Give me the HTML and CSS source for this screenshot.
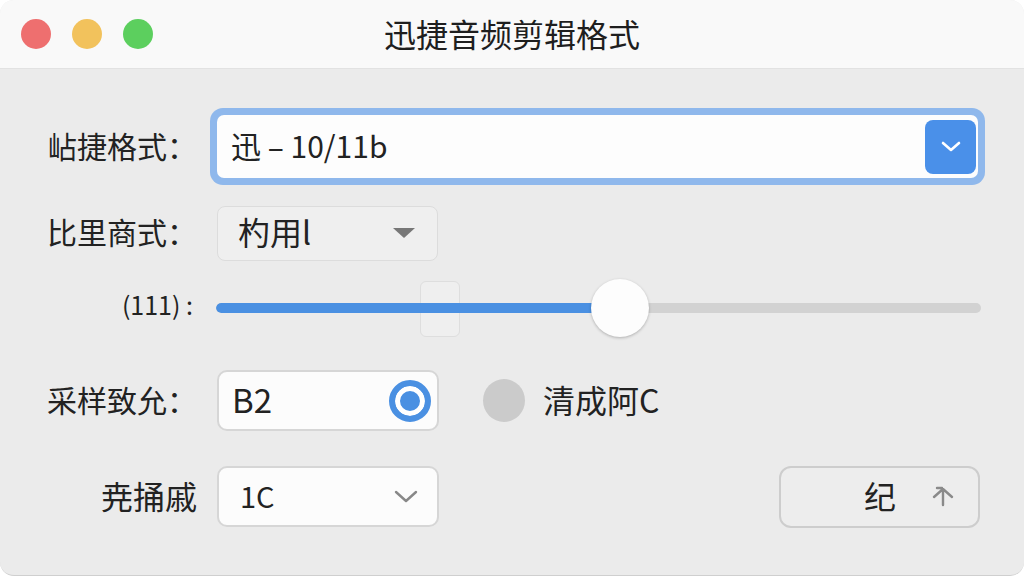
FILE: index.html
```html
<!DOCTYPE html>
<html lang="zh">
<head>
    <meta charset="UTF-8">
    <meta name="viewport" content="width=device-width, initial-scale=1.0">
    <title>迅捷音频剪辑格式</title>
    <link rel="stylesheet" href="styles.css">
</head>
<body>
    <div class="window">
        <div class="titlebar">
            <div class="lights">
                <span class="light red"></span>
                <span class="light yellow"></span>
                <span class="light green"></span>
            </div>
            <div class="title">迅捷音频剪辑格式</div>
        </div>

        <div class="content">
            <!-- format -->
            <div class="row row-format">
                <label class="label">岾捷格式：</label>
                <div class="focus-ring">
                    <div class="select-main">
                        <span class="value">迅 – 10/11b</span>
                        <span class="select-btn">
                            <svg width="22" height="14" viewBox="0 0 22 14"><path d="M3 3 L11 10 L19 3" fill="none" stroke="#fff" stroke-width="2.6" stroke-linecap="round" stroke-linejoin="round"/></svg>
                        </span>
                    </div>
                </div>
            </div>

            <!-- mode -->
            <div class="row row-mode">
                <label class="label">比里商式：</label>
                <div class="popup">
                    <span class="value">杓用l</span>
                    <span class="triangle"></span>
                </div>
            </div>

            <!-- slider -->
            <div class="row row-slider">
                <label class="label label-small">(111) :</label>
                <div class="slider">
                    <div class="ghost"></div>
                    <div class="track">
                        <div class="fill" style="width: 52.8%"></div>
                    </div>
                    <div class="thumb" style="left: 52.8%"></div>
                </div>
            </div>

            <!-- sample rate -->
            <div class="row row-rate">
                <label class="label">采样致允：</label>
                <div class="field">
                    <span class="value value-big">B2</span>
                    <span class="radio on"></span>
                </div>
                <span class="radio off"></span>
                <span class="option-text">清成阿C</span>
            </div>

            <!-- bottom -->
            <div class="row row-last">
                <label class="label">尭捅戚</label>
                <div class="field">
                    <span class="value value-narrow">1C</span>
                    <svg class="chevron" width="26" height="16" viewBox="0 0 26 16"><path d="M3 3 L13 12 L23 3" fill="none" stroke="#888" stroke-width="2.4" stroke-linecap="round" stroke-linejoin="round"/></svg>
                </div>
                <button class="action">
                    <span class="action-text">纪</span>
                    <svg width="26" height="26" viewBox="0 0 26 26"><path d="M4 13 L13 5 L22 13 M13 5 V21 M7 4 H12" fill="none" stroke="#8a8a8a" stroke-width="2.4" stroke-linecap="round" stroke-linejoin="round"/></svg>
                </button>
            </div>
        </div>
    </div>
</body>
</html>
```

FILE: styles.css
```css
body {
    margin: 0;
    padding: 0;
    background-color: #ffffff;
    font-family: "Noto Sans CJK SC", "Noto Sans", sans-serif;
    color: #222;
}
.window {
    width: 1024px;
    height: 575px;
    border-radius: 14px;
    overflow: hidden;
    background-color: #ebebeb;
    border-bottom: 1px solid #cfcfcf;
    display: flex;
    flex-direction: column;
}
.titlebar {
    height: 68px;
    flex: 0 0 68px;
    background-color: #f9f9f9;
    border-bottom: 1px solid #e2e2e2;
    display: flex;
    align-items: center;
    position: relative;
}
.lights {
    display: flex;
    gap: 21px;
    padding-left: 21px;
}
.light {
    width: 30px;
    height: 30px;
    border-radius: 50%;
}
.red { background-color: #ee6f6f; }
.yellow { background-color: #f2c25c; }
.green { background-color: #5ccf5e; }
.title {
    position: absolute;
    left: 0;
    right: 0;
    text-align: center;
    font-size: 32px;
    font-weight: 400;
    color: #1e1e1e;
    padding-bottom: 2px;
}
.content {
    flex: 1;
    display: flex;
    flex-direction: column;
}
.row {
    display: flex;
    align-items: center;
}
.label {
    width: 197px;
    flex: 0 0 197px;
    text-align: right;
    font-size: 30px;
    color: #222;
    white-space: nowrap;
    padding-bottom: 4px;
}
.label-small {
    font-size: 25px;
    padding-right: 4px;
    box-sizing: border-box;
    padding-bottom: 8px;
}

/* row 1 */
.row-format {
    margin-top: 39px;
    height: 77px;
}
.focus-ring {
    margin-left: 13px;
    width: 775px;
    height: 77px;
    box-sizing: border-box;
    padding: 7px;
    border-radius: 13px;
    background-color: #8fb8ec;
}
.select-main {
    height: 100%;
    background-color: #fdfdfd;
    border-radius: 7px;
    display: flex;
    align-items: center;
    justify-content: space-between;
    padding: 0 2px 0 14px;
}
.value {
    font-size: 30px;
    color: #222;
    padding-bottom: 4px;
}
.select-btn {
    width: 51px;
    height: 54px;
    border-radius: 8px;
    background-color: #4a90e9;
    display: flex;
    align-items: center;
    justify-content: center;
}

/* row 2 */
.row-mode {
    margin-top: 20px;
    height: 56px;
}
.popup {
    margin-left: 20px;
    width: 221px;
    height: 55px;
    box-sizing: border-box;
    background-color: #efefef;
    border: 1px solid #dcdcdc;
    border-radius: 8px;
    display: flex;
    align-items: center;
    justify-content: space-between;
    padding: 0 22px 0 20px;
}
.popup .value {
    font-size: 32px;
}
.triangle {
    width: 0;
    height: 0;
    border-left: 11px solid transparent;
    border-right: 11px solid transparent;
    border-top: 10px solid #777;
}

/* row 3 */
.row-slider {
    margin-top: 17px;
    height: 60px;
}
.slider {
    margin-left: 19px;
    width: 765px;
    height: 60px;
    position: relative;
}
.ghost {
    position: absolute;
    left: 204px;
    top: 3px;
    width: 40px;
    height: 56px;
    box-sizing: border-box;
    background-color: #efefef;
    border: 1px solid #dedede;
    border-radius: 6px;
}
.track {
    position: absolute;
    left: 0;
    right: 0;
    top: 25px;
    height: 10px;
    border-radius: 5px;
    background-color: #d2d2d2;
    overflow: hidden;
}
.fill {
    height: 100%;
    background-color: #4a90e2;
    border-radius: 5px 0 0 5px;
}
.thumb {
    position: absolute;
    top: 1px;
    width: 58px;
    height: 58px;
    margin-left: -29px;
    border-radius: 50%;
    background-color: #fdfdfd;
    box-shadow: 0 1px 3px rgba(0,0,0,0.25);
}

/* row 4 */
.row-rate {
    margin-top: 32px;
    height: 61px;
}
.field {
    margin-left: 20px;
    width: 222px;
    height: 61px;
    box-sizing: border-box;
    background-color: #fcfcfc;
    border: 2px solid #d6d6d6;
    border-radius: 10px;
    display: flex;
    align-items: center;
    justify-content: space-between;
    padding: 0 6px 0 13px;
}
.value-big {
    font-size: 33px;
}
.radio {
    width: 42px;
    height: 42px;
    border-radius: 50%;
    box-sizing: border-box;
    flex: 0 0 42px;
}
.radio.on {
    background-color: #4a90e2;
    border: 6px solid #4a90e2;
    box-shadow: inset 0 0 0 5px #fff;
}
.radio.off {
    background-color: #cbcbcb;
    margin-left: 44px;
    width: 43px;
    height: 43px;
}
.option-text {
    margin-left: 18px;
    font-size: 32px;
    color: #222;
    padding-bottom: 4px;
}

/* row 5 */
.row-last {
    margin-top: 35px;
    height: 61px;
}
.row-last .label {
    font-size: 32px;
}
.value-narrow {
    padding-left: 8px;
    font-size: 29px;
}
.chevron {
    margin-right: 12px;
}
.action {
    margin-left: 340px;
    width: 201px;
    height: 62px;
    box-sizing: border-box;
    background-color: #ededed;
    border: 2px solid #cdcdcd;
    border-radius: 12px;
    display: flex;
    align-items: center;
    justify-content: flex-end;
    padding: 0 22px 0 0;
    gap: 34px;
    font-family: inherit;
}
.action-text {
    font-size: 32px;
    color: #222;
    padding-bottom: 4px;
}
```
